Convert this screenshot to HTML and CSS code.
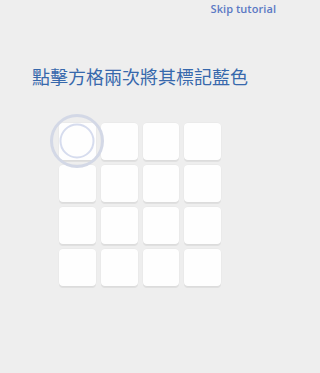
FILE: index.html
```html
<!DOCTYPE html>
<html lang="zh-Hant">
<head>
<meta charset="utf-8">
<link rel="stylesheet" href="styles.css">
</head>
<body>
<div class="page">
  <div class="topbar"><span class="skip">Skip tutorial</span></div>
  <h1 class="title">點擊方格兩次將其標記藍色</h1>
  <div class="board">
    <div class="tile"></div><div class="tile"></div><div class="tile"></div><div class="tile"></div>
    <div class="tile"></div><div class="tile"></div><div class="tile"></div><div class="tile"></div>
    <div class="tile"></div><div class="tile"></div><div class="tile"></div><div class="tile"></div>
    <div class="tile"></div><div class="tile"></div><div class="tile"></div><div class="tile"></div>
    <svg class="tap" width="60" height="60" viewBox="0 0 60 60">
      <circle cx="30" cy="30" r="25.5" fill="none" stroke="#d3d8e6" stroke-width="3"/>
      <circle cx="30" cy="30" r="16.5" fill="none" stroke="#d6dcee" stroke-width="2"/>
    </svg>
  </div>
</div>
</body>
</html>
```
FILE: styles.css
```css
html, body {
  margin: 0;
  padding: 0;
  background: #eeeeee;
}
.page {
  width: 280px;
  height: 373px;
  display: flex;
  flex-direction: column;
  align-items: center;
}
.topbar {
  align-self: stretch;
  display: flex;
  justify-content: flex-end;
  padding: 1px 4px 0 0;
  height: 15px;
}
.skip {
  font-family: "Open Sans", sans-serif;
  font-weight: 600;
  font-size: 11px;
  line-height: 15px;
  letter-spacing: 0.05px;
  color: #5b79c4;
}
.title {
  margin: 51px 0 0 0;
  font-family: "Noto Sans CJK TC", sans-serif;
  font-weight: 400;
  font-size: 18px;
  line-height: 18px;
  color: #3768ac;
  white-space: nowrap;
}
.board {
  position: relative;
  margin-top: 38px;
  width: 162px;
  display: grid;
  grid-template-columns: repeat(4, 1fr);
  grid-auto-rows: 37px;
  gap: 5px;
}
.tile {
  background: #fefefe;
  border-radius: 4px;
  box-shadow: 0 2px 0 rgba(0, 0, 0, 0.06), 0 0 0 0.5px rgba(0, 0, 0, 0.03);
}
.tap {
  position: absolute;
  left: -12px;
  top: -12px;
}
```
